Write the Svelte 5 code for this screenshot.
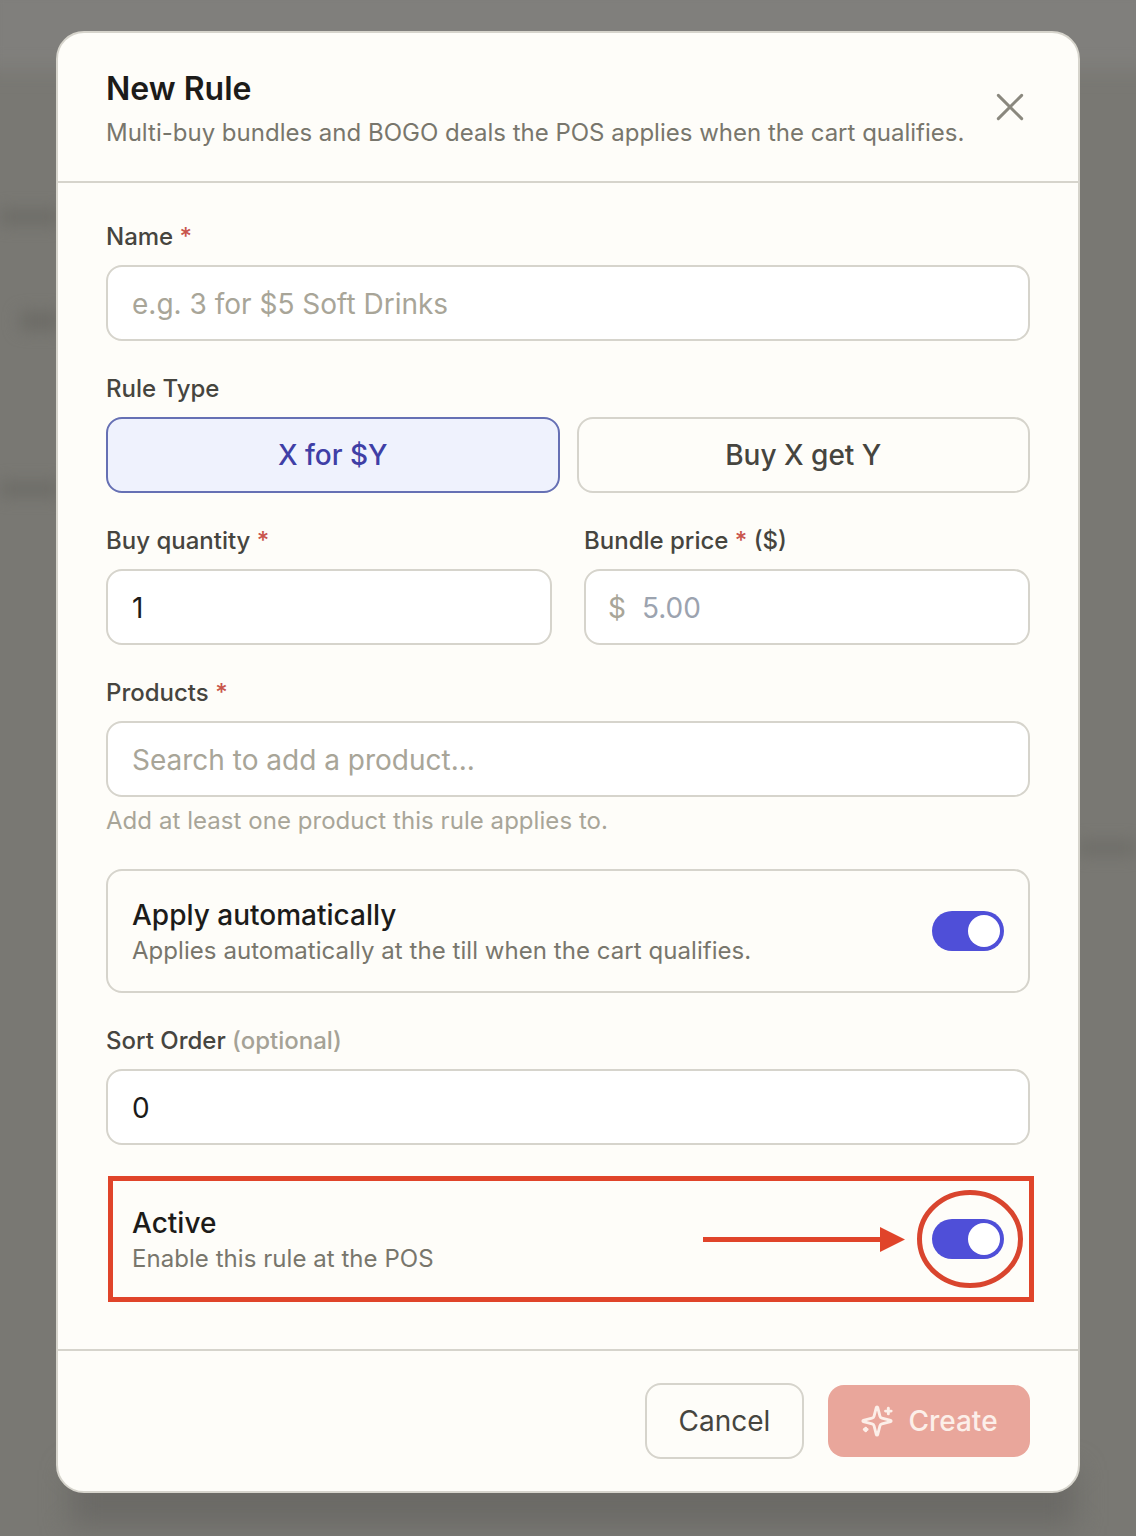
<script lang="ts">
  let name = $state('');
  let quantity = $state('1');
  let price = $state('');
  let search = $state('');
  let sortOrder = $state('0');
  let ruleType = $state('bundle');
  let applyAuto = $state(true);
  let active = $state(true);
</script>

<div class="overlay">
  <div class="backdrop" aria-hidden="true">
    <span class="backdrop__top"></span>
    <span class="backdrop__bottom"></span>
    <span class="backdrop__band backdrop__band--a"></span>
    <span class="backdrop__band backdrop__band--b"></span>
    <span class="backdrop__band backdrop__band--c"></span>
    <span class="backdrop__band backdrop__band--d"></span>
  </div>

  <div class="modal">
    <header class="modal__header">
      <div class="modal__heading">
        <h2 class="modal__title">New Rule</h2>
        <p class="modal__subtitle">Multi-buy bundles and BOGO deals the POS applies when the cart qualifies.</p>
      </div>
      <button class="modal__close" aria-label="Close">
        <svg viewBox="0 0 24 24" width="40" height="40" fill="none" stroke="currentColor" stroke-width="1.8" stroke-linecap="round">
          <path d="M19 5 5 19" />
          <path d="m5 5 14 14" />
        </svg>
      </button>
    </header>

    <div class="modal__body">
      <div class="field">
        <label class="field__label" for="ruleName">Name <span class="field__req">*</span></label>
        <input id="ruleName" class="input" placeholder="e.g. 3 for $5 Soft Drinks" bind:value={name} />
      </div>

      <div class="field">
        <span class="field__label">Rule Type</span>
        <div class="segments">
          <button class="segment" class:segment--active={ruleType === 'bundle'} onclick={() => (ruleType = 'bundle')}>X for $Y</button>
          <button class="segment" class:segment--active={ruleType === 'bogo'} onclick={() => (ruleType = 'bogo')}>Buy X get Y</button>
        </div>
      </div>

      <div class="pair">
        <div class="field">
          <label class="field__label" for="buyQty">Buy quantity <span class="field__req">*</span></label>
          <input id="buyQty" class="input" bind:value={quantity} />
        </div>
        <div class="field">
          <label class="field__label" for="bundlePrice">Bundle price <span class="field__req">*</span> ($)</label>
          <div class="money">
            <span class="money__sign">$</span>
            <input id="bundlePrice" class="money__input" placeholder="5.00" bind:value={price} />
          </div>
        </div>
      </div>

      <div class="field">
        <label class="field__label" for="productSearch">Products <span class="field__req">*</span></label>
        <input id="productSearch" class="input" placeholder="Search to add a product..." bind:value={search} />
        <p class="field__hint">Add at least one product this rule applies to.</p>
      </div>

      <div class="switchCard">
        <div class="switchCard__copy">
          <div class="switchCard__title">Apply automatically</div>
          <div class="switchCard__text">Applies automatically at the till when the cart qualifies.</div>
        </div>
        <button class="toggle" class:toggle--on={applyAuto} aria-label="Apply automatically" onclick={() => (applyAuto = !applyAuto)}>
          <span class="toggle__knob"></span>
        </button>
      </div>

      <div class="field">
        <label class="field__label" for="sortOrder">Sort Order <span class="field__optional">(optional)</span></label>
        <input id="sortOrder" class="input" bind:value={sortOrder} />
      </div>

      <div class="switchCard switchCard--marked">
        <div class="switchCard__copy">
          <div class="switchCard__title">Active</div>
          <div class="switchCard__text">Enable this rule at the POS</div>
        </div>
        <button class="toggle" class:toggle--on={active} aria-label="Active" onclick={() => (active = !active)}>
          <span class="toggle__knob"></span>
        </button>

        <!-- Red callout drawn over the row -->
        <svg class="callout" viewBox="0 0 928 128" width="928" height="128" fill="none" aria-hidden="true">
          <rect x="3.5" y="2.5" width="921" height="121" stroke="#e0442a" stroke-width="5" />
          <ellipse cx="863" cy="63" rx="50.500" ry="46.500" stroke="#d9452e" stroke-width="5" />
          <path d="M596 63.500h178" stroke="#e0442a" stroke-width="5" />
          <path d="M773 51 798 63.500 773 76z" fill="#e0442a" />
        </svg>
      </div>
    </div>

    <footer class="modal__footer">
      <button class="btn btn--ghost">Cancel</button>
      <button class="btn btn--primary">
        <svg viewBox="0 0 24 24" width="34" height="34" fill="none" stroke="currentColor" stroke-width="2" stroke-linecap="round" stroke-linejoin="round">
          <path d="M9.937 15.5A2 2 0 0 0 8.5 14.063l-6.135-1.582a.5.5 0 0 1 0-.962L8.5 9.936A2 2 0 0 0 9.937 8.5l1.582-6.135a.5.5 0 0 1 .963 0L14.063 8.500A2 2 0 0 0 15.500 9.937l6.135 1.581a.5.500 0 0 1 0 .964L15.500 14.063a2 2 0 0 0-1.437 1.437l-1.582 6.135a.5.5 0 0 1-.963 0z" />
          <path d="M20 3v4" />
          <path d="M22 5h-4" />
          <path d="M4 17v2" />
          <path d="M5 18H3" />
        </svg>
        Create
      </button>
    </footer>
  </div>
</div>

<style>
  :global(body) {
    margin: 0;
    font-family: Inter, 'Noto Sans', sans-serif;
  }

  .overlay {
    position: relative;
    box-sizing: border-box;
    height: 1536px;
    padding: 31px 56px 0 56px;
    overflow: hidden;
    background: #797873;
  }

  .backdrop {
    position: absolute;
    inset: 0;
  }

  .backdrop__top {
    position: absolute;
    left: -20px;
    right: -20px;
    top: -20px;
    height: 90px;
    background: #807f7c;
    filter: blur(10px);
  }

  /* Shadow pooling under the dialog */
  .backdrop__bottom {
    position: absolute;
    left: 70px;
    right: 60px;
    top: 1470px;
    height: 56px;
    background: #6b6a66;
    filter: blur(14px);
  }

  .backdrop__band {
    position: absolute;
    background: #6c6b66;
    filter: blur(8px);
  }

  .backdrop__band--a {
    left: 0;
    width: 60px;
    top: 210px;
    height: 14px;
  }

  .backdrop__band--b {
    left: 20px;
    width: 40px;
    top: 312px;
    height: 18px;
  }

  .backdrop__band--c {
    left: 0;
    width: 60px;
    top: 482px;
    height: 14px;
  }

  .backdrop__band--d {
    right: 0;
    width: 58px;
    top: 842px;
    height: 12px;
  }

  .modal {
    position: relative;
    box-sizing: border-box;
    width: 1024px;
    height: 1462px;
    display: flex;
    flex-direction: column;
    background: #fefdf9;
    border: 2px solid #d6d4cc;
    border-radius: 28px;
    color: #1c1b19;
  }

  .modal__header {
    display: flex;
    align-items: center;
    justify-content: space-between;
    box-sizing: border-box;
    height: 150px;
    padding: 0 48px;
    border-bottom: 2px solid #d6d4cc;
  }

  .modal__heading {
    padding-top: 5px;
  }

  .modal__title {
    margin: 0;
    font-size: 32px;
    line-height: 38px;
    font-weight: 600;
    color: #1c1b19;
  }

  .modal__subtitle {
    margin: 9px 0 0;
    font-size: 24px;
    line-height: 32px;
    color: #78766c;
  }

  .modal__close {
    display: flex;
    padding: 0;
    border: none;
    background: none;
    color: #8a887e;
    cursor: pointer;
  }

  .modal__body {
    flex: 1;
    display: flex;
    flex-direction: column;
    gap: 32px;
    padding: 38px 48px 0 48px;
  }

  .modal__footer {
    display: flex;
    justify-content: flex-end;
    align-items: center;
    gap: 24px;
    box-sizing: border-box;
    height: 142px;
    padding: 0 48px 0 0;
    border-top: 2px solid #d6d4cc;
  }

  .field {
    display: flex;
    flex-direction: column;
    min-width: 0;
  }

  .field__label {
    font-size: 24px;
    line-height: 32px;
    font-weight: 500;
    color: #46453f;
    margin-bottom: 12px;
  }

  .field__req {
    color: #c9564c;
  }

  .field__optional {
    color: #a5a296;
  }

  .field__hint {
    margin: 8px 0 0;
    font-size: 24px;
    line-height: 32px;
    letter-spacing: 0.05px;
    color: #a8a598;
  }

  .input {
    box-sizing: border-box;
    width: 100%;
    height: 76px;
    padding: 1px 24px 0;
    background: #fff;
    border: 2px solid #d6d4cc;
    border-radius: 16px;
    font: 400 28px Inter, sans-serif;
    color: #1c1b19;
    outline: none;
  }

  .input::placeholder {
    color: #a8a598;
    opacity: 1;
  }

  .segments {
    display: grid;
    grid-template-columns: 1fr 1fr;
    gap: 17px;
  }

  .segment {
    height: 76px;
    padding: 0;
    background: #fefdf9;
    border: 2px solid #d6d4cc;
    border-radius: 16px;
    font: 500 28px Inter, sans-serif;
    color: #46453f;
    cursor: pointer;
  }

  .segment--active {
    background: #eff2fd;
    border-color: #6670b4;
    color: #3f3fa6;
  }

  .pair {
    display: grid;
    grid-template-columns: 1fr 1fr;
    gap: 32px;
  }

  .money {
    display: flex;
    align-items: center;
    gap: 16px;
    box-sizing: border-box;
    height: 76px;
    padding: 1px 22px 0;
    background: #fff;
    border: 2px solid #d6d4cc;
    border-radius: 16px;
  }

  .money__sign {
    font-size: 28px;
    color: #a8a598;
  }

  .money__input {
    flex: 1;
    min-width: 0;
    padding: 0;
    border: none;
    outline: none;
    background: none;
    font: 400 28px Inter, sans-serif;
    color: #1c1b19;
  }

  .money__input::placeholder {
    color: #9ca3af;
    opacity: 1;
  }

  .switchCard {
    position: relative;
    display: flex;
    align-items: center;
    justify-content: space-between;
    box-sizing: border-box;
    height: 124px;
    padding: 0 24px;
    border: 2px solid #d6d4cc;
    border-radius: 16px;
  }

  .switchCard--marked {
    border-color: transparent;
  }

  .switchCard__copy {
    padding-top: 2px;
  }

  .switchCard__title {
    font-size: 28px;
    line-height: 36px;
    font-weight: 500;
    color: #1c1b19;
  }

  .switchCard__text {
    margin-top: 2px;
    font-size: 24px;
    line-height: 32px;
    letter-spacing: 0.05px;
    color: #78766c;
  }

  .toggle {
    position: relative;
    width: 72px;
    height: 40px;
    padding: 0;
    border: none;
    border-radius: 20px;
    background: #d6d4cc;
    cursor: pointer;
  }

  .toggle--on {
    background: #4f4fd8;
  }

  .toggle__knob {
    position: absolute;
    top: 4px;
    left: 4px;
    width: 32px;
    height: 32px;
    border-radius: 50%;
    background: #fff;
  }

  .toggle--on .toggle__knob {
    left: 36px;
  }

  .callout {
    position: absolute;
    left: -1px;
    top: -3px;
    pointer-events: none;
  }

  .btn {
    display: flex;
    align-items: center;
    justify-content: center;
    box-sizing: border-box;
    border-radius: 16px;
    cursor: pointer;
  }

  .btn--ghost {
    width: 159px;
    height: 76px;
    background: #fefdf9;
    border: 2px solid #d6d4cc;
    font: 400 28px Inter, sans-serif;
    color: #46453f;
  }

  .btn--primary {
    gap: 14px;
    width: 202px;
    height: 72px;
    border: none;
    background: #e9a69b;
    font: 500 28px Inter, sans-serif;
    color: #fcefe9;
  }
</style>
